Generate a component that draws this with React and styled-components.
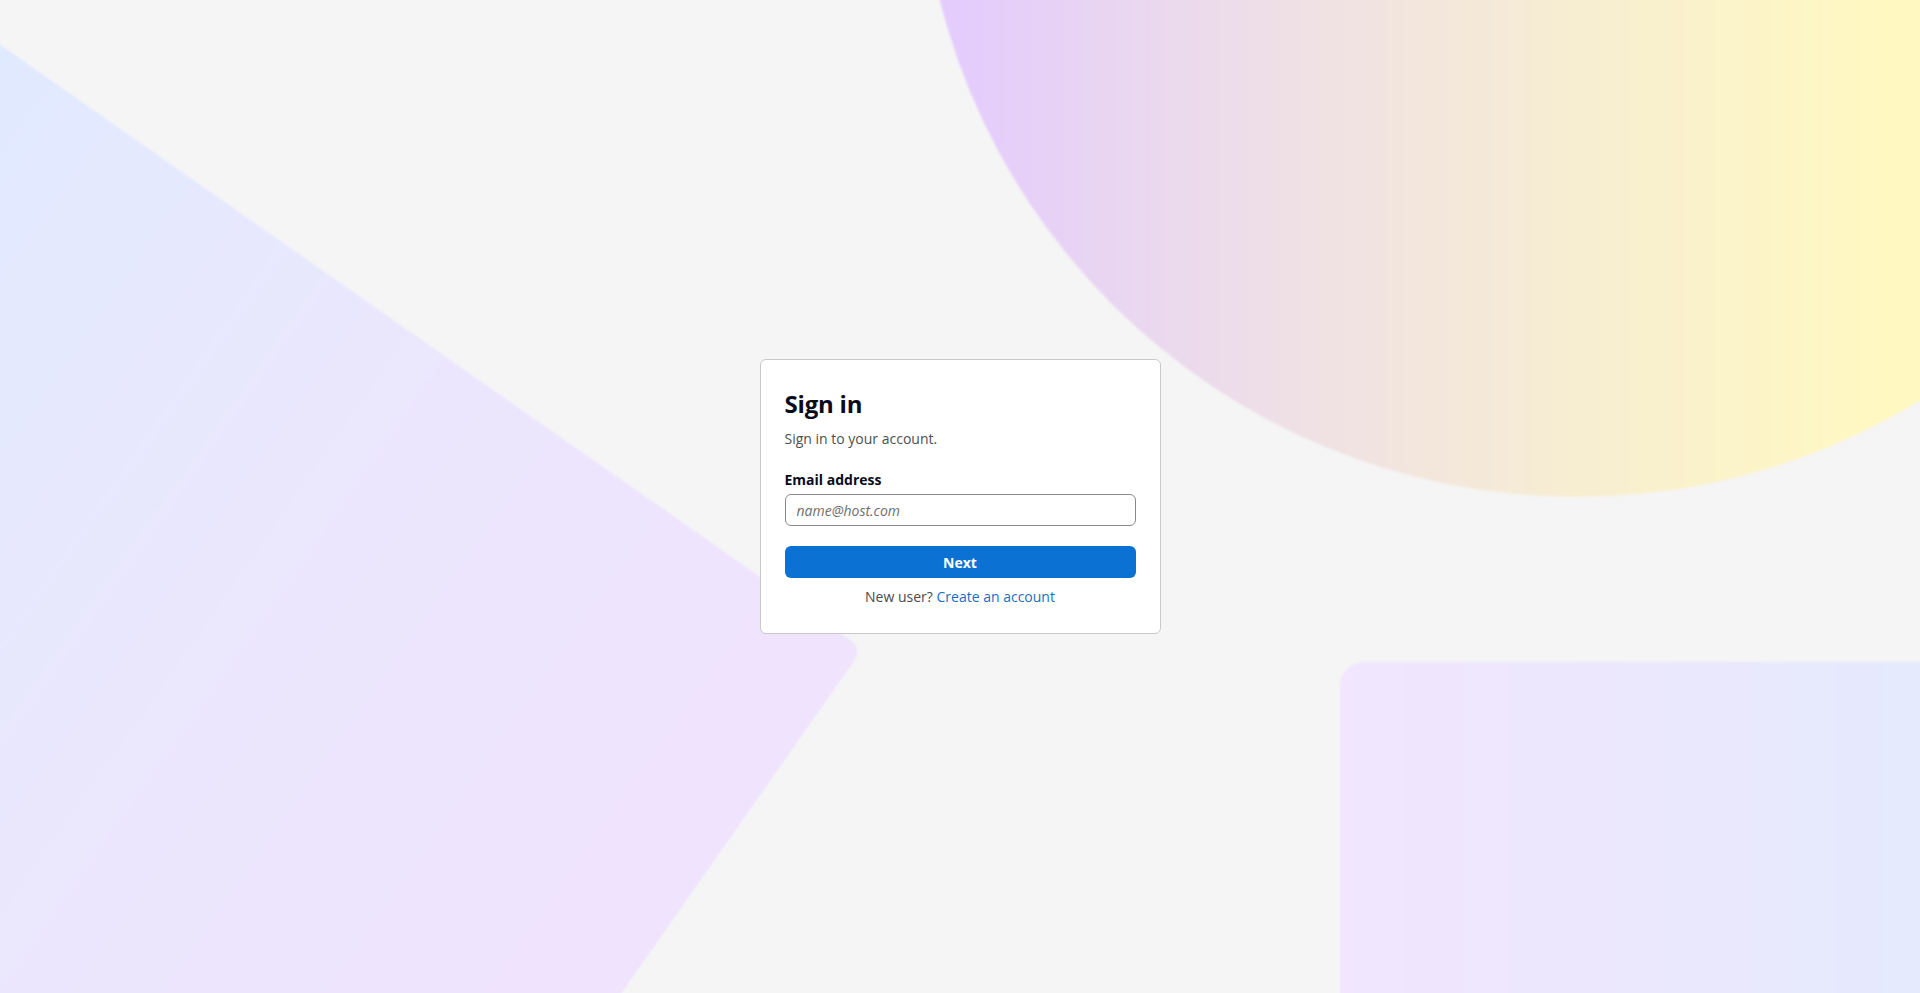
import React from 'react';
import styled, { createGlobalStyle } from 'styled-components';

const GlobalStyle = createGlobalStyle`
    * {
        box-sizing: border-box;
    }

    html,
    body {
        margin: 0;
        padding: 0;
        height: 100%;
    }

    body {
        font-family: 'Open Sans', 'Noto Sans', Arial, sans-serif;
        background: #f5f5f5;
        color: #0b0b1c;
    }
`;

const Page = styled.main`
    position: relative;
    width: 100vw;
    height: 100vh;
    overflow: hidden;
    background: #f5f5f5;
    display: flex;
    align-items: center;
    justify-content: center;
`;

// decorative background shapes, they sit behind the card
const Orb = styled.div`
    position: absolute;
    left: 920px;
    top: -817px;
    width: 1314px;
    height: 1314px;
    border-radius: 50%;
    background: linear-gradient(90deg, #e3caff 0%, #efe0e6 28%, #f7eed2 50%, #fff8c2 72%, #fffabb 100%);
    filter: blur(1px);
`;

const Slab = styled.div`
    position: absolute;
    left: -573px;
    top: 196px;
    width: 1200px;
    height: 1200px;
    border-radius: 14px;
    transform: rotate(35deg);
    background: linear-gradient(90deg, #d9e8ff 0%, #e3eaff 20%, #ebe7fd 55%, #f0e3fd 100%);
    filter: blur(1px);
`;

const Tile = styled.div`
    position: absolute;
    left: 1340px;
    top: 662px;
    width: 700px;
    height: 520px;
    border-radius: 24px;
    background: linear-gradient(90deg, #f1e6fd 0%, #ebe8fd 45%, #e2ebfd 100%);
    filter: blur(1px);
`;

const Card = styled.section`
    position: relative;
    z-index: 1;
    width: 401px;
    padding: 27px 24px 26px;
    background: #ffffff;
    border: 1px solid #c9c9c9;
    border-radius: 6px;
    display: flex;
    flex-direction: column;
`;

const Title = styled.h1`
    margin: 0 0 9px;
    font-size: 24px;
    line-height: 33px;
    font-weight: 700;
    color: #0b0b1c;
    letter-spacing: -0.2px;
`;

const Subtitle = styled.p`
    margin: 0 0 21px;
    font-size: 14px;
    line-height: 20px;
    color: #4a4f57;
`;

const Field = styled.label`
    display: flex;
    flex-direction: column;
    gap: 4px;
`;

const FieldLabel = styled.span`
    font-size: 14px;
    line-height: 20px;
    font-weight: 700;
    color: #0b0b1c;
`;

const Input = styled.input`
    height: 32px;
    width: 100%;
    padding: 0 11px;
    border: 1px solid #8a8a8a;
    border-radius: 6px;
    background: #fff;
    font-family: inherit;
    font-size: 14px;
    color: #242424;
    outline: none;

    &::placeholder {
        font-style: italic;
        color: #6e6e6e;
    }
`;

const PrimaryButton = styled.button`
    margin-top: 20px;
    height: 32px;
    width: 100%;
    border: none;
    border-radius: 6px;
    background: #0b71d3;
    color: #ffffff;
    font-family: inherit;
    font-size: 14px;
    font-weight: 700;
    cursor: pointer;
`;

const Footer = styled.p`
    margin: 9px 0 0;
    font-size: 14px;
    line-height: 20px;
    text-align: center;
    color: #4a4a4a;
`;

const Link = styled.a`
    color: #1a6ebf;
    text-decoration: none;
`;

export default function App() {
    return (
        <>
            <GlobalStyle />
            <Page>
                <Slab />
                <Orb />
                <Tile />
                <Card>
                    <Title>Sign in</Title>
                    <Subtitle>Sign in to your account.</Subtitle>
                    <Field>
                        <FieldLabel>Email address</FieldLabel>
                        <Input type="email" placeholder="name@host.com" />
                    </Field>
                    <PrimaryButton type="button">Next</PrimaryButton>
                    <Footer>
                        New user? <Link href="#">Create an account</Link>
                    </Footer>
                </Card>
            </Page>
        </>
    );
}
